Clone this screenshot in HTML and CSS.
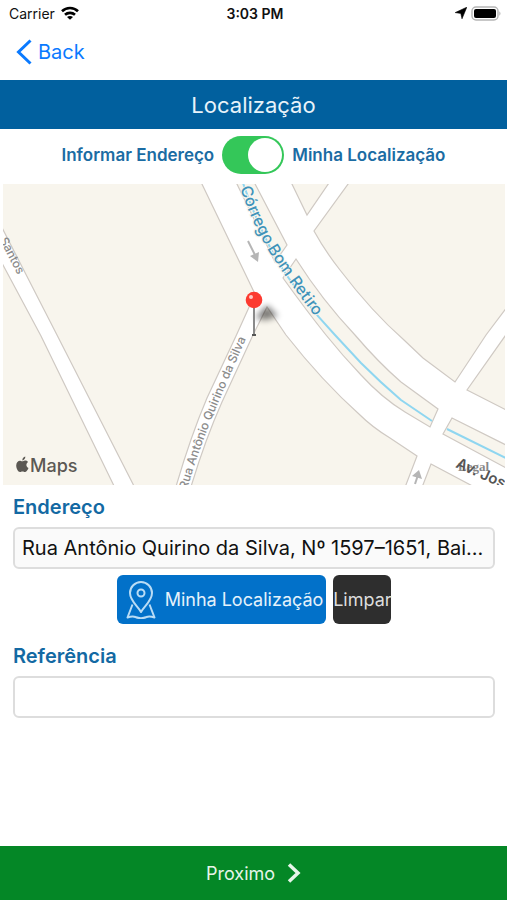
FILE: index.html
```html
<!DOCTYPE html>
<html lang="pt-BR">
<head>
    <meta charset="UTF-8">
    <meta name="viewport" content="width=device-width, initial-scale=1.0">
    <title>Localização</title>
    <link rel="stylesheet" href="styles.css">
</head>
<body>
    <div class="status-bar">
        <div class="carrier">
            <span>Carrier</span>
            <svg width="18" height="14" viewBox="0 0 18 14" fill="none" stroke="#000" stroke-width="2.600">
                <path d="M1 5.2C5.4 .9 12.6 .9 17 5.2"/>
                <path d="M4 8.800c2.800-2.600 7.200-2.600 10 0"/>
                <path d="M9 13.800L6 11c1.700-1.500 4.300-1.500 6 0z" fill="#000" stroke="none"/>
            </svg>
        </div>
        <div class="time">3:03 PM</div>
        <div class="indicators">
            <svg width="12" height="12" viewBox="0 0 12 12">
                <path d="M11.800 .2L7 11.800 5.800 6.400 .2 5.600z" stroke="#000" stroke-width=".6"/>
            </svg>
            <svg width="30" height="15" viewBox="0 0 30 15">
                <rect x="1" y="1" width="26" height="13" rx="4" fill="#fff" stroke="#b5b5b5" stroke-width="1.4"/>
                <rect x="3" y="3" width="22" height="9" rx="2"/>
                <path d="M28.3 5.3c1.6.8 1.6 3.6 0 4.4z" fill="#b5b5b5"/>
            </svg>
        </div>
    </div>

    <nav class="nav">
        <a href="#" class="back">
            <svg width="16" height="26" viewBox="0 0 16 26" fill="none" stroke="#0a7aff" stroke-width="3">
                <path d="M14.5 1.5L2.5 13l12 11.5"/>
            </svg>
            Back
        </a>
    </nav>

    <h1 class="title">Localização</h1>

    <div class="mode">
        <span>Informar Endereço</span>
        <input type="checkbox" id="mode-switch" class="switch" checked>
        <label for="mode-switch">Minha Localização</label>
    </div>

    <div class="map">
        <svg class="map-canvas" viewBox="3 184 502 301" preserveAspectRatio="xMidYMid slice">
            <defs>
                <path id="p-corrego" d="M240 188Q253 225 268 250T326 331"/>
                <path id="p-rua" d="M187 490Q198 452 212 418T249 332"/>
                <path id="p-santos" d="M-5 231L30 299"/>
                <path id="p-jose" d="M455 467L520 496"/>
                <filter id="soft" x="-50%" y="-50%" width="200%" height="200%"><feGaussianBlur stdDeviation="3"/></filter>
            </defs>

            <!-- blocks -->
            <g class="block">
                <path d="M-5 250L3 265 41 336 116 490H-5z"/>
                <path d="M-5 180H200L255 294 236 336 207 398Q190 438 175 490H136L57 335-5 214z"/>
                <path d="M267 307L253 335 222 402Q205 440 190 490H404L417 456 390 438Q372 427 360 415 322 381 286 335z"/>
                <path d="M431 464L480 490H421z"/>
                <path d="M235 180H253L287 245 275 262z"/>
                <path d="M296 259L283 278Q306 310 326 335 342 355 361 375 382 398 405 412L430 427 438 409 401 382Q378 362 355 335 322 300 296 259z"/>
                <path d="M452 418L510 447V470L443 434z"/>
                <path d="M290 180L307 215 331 180z"/>
                <path d="M351 180L314 231Q325 251 340 270 372 312 404 340L423 358 455 382 486 335 510 303V180z"/>
                <path d="M467 390L510 412V329z"/>
            </g>

            <!-- stream -->
            <g class="water">
                <path d="M242 180Q256 222 275 257 300 298 335 335L361 363Q380 382 401 400L432 421"/>
                <path d="M447 429L510 460"/>
            </g>

            <g class="arrow">
                <path d="M248 241L255 255"/>
                <path class="head" d="M250 256L259 252 258 262z"/>
                <path d="M415 484L418 475"/>
                <path class="head" d="M412 476L419 470 422 479z"/>
            </g>

            <text class="stream-name"><textPath href="#p-corrego">Córrego Bom Retiro</textPath></text>
            <text class="street-name"><textPath href="#p-rua">Rua Antônio Quirino da Silva</textPath></text>
            <text class="street-name"><textPath href="#p-santos" startOffset="10">Santos</textPath></text>
            <text class="legal" x="458" y="471">Legal</text>
            <text class="avenue-name"><textPath href="#p-jose">Av. José</textPath></text>

            <!-- pin -->
            <path d="M255 318L267 305 278 316 266 320z" opacity=".5" filter="url(#soft)"/>
            <path d="M254 308V334" stroke="#8a8a8a" stroke-width="2"/>
            <path d="M252 335H256" stroke="#555" stroke-width="2"/>
            <circle cx="254" cy="300" r="8.3" fill="#fc3a30"/>
            <circle cx="251" cy="297" r="2" fill="#ffc9c5"/>

            <!-- apple logo -->
            <g fill="#5b5853">
                <path d="M23 461.2c1.4-.9 3.800-.9 5 .8-2.300 1.500-2 5 .5 6-.8 2.200-2.200 4-3.500 4-1 0-1.400-.5-2.500-.5s-1.600.5-2.500.5c-2 0-3.800-3.700-3.800-6.500 0-3.600 2.800-5.200 4.700-4.500 1 .4 1.500.4 2.100.2z"/>
                <path d="M22.300 460.400c0-2 1.300-3.500 3-3.800.2 2-1.200 3.700-3 3.800z"/>
            </g>
            <text class="maps-name" x="30" y="472">Maps</text>
        </svg>
    </div>

    <form class="form">
        <label for="endereco">Endereço</label>
        <input type="text" id="endereco" class="filled" value="Rua Antônio Quirino da Silva, Nº 1597–1651, Bai..." readonly>
        <div class="actions">
            <button type="button" class="btn-location">
                <svg width="30" height="38" viewBox="0 0 30 38" fill="none" stroke="#b9dcf5" stroke-width="2" stroke-linejoin="round">
                    <path d="M15 31C12 25 4 20 4 12a11 11 0 0 1 22 0c0 8-8 13-11 19z"/>
                    <circle cx="15" cy="12" r="3.500"/>
                    <path d="M6.500 23.500L1.500 36.500c4-1.500 6-1.500 8-.5 3 1.300 8 1.300 11 0 2-1 4-1 8 .5L23.500 23.500"/>
                </svg>
                Minha Localização
            </button>
            <button type="button" class="btn-clear">Limpar</button>
        </div>
        <label for="referencia">Referência</label>
        <input type="text" id="referencia">
    </form>

    <button type="button" class="next">
        Proximo
        <svg width="14" height="20" viewBox="0 0 14 20" fill="none" stroke="#e6f5e9" stroke-width="3.500">
            <path d="M2 1.500L11 10 2 18.500"/>
        </svg>
    </button>
</body>
</html>
```

FILE: styles.css
```css
* {
    box-sizing: border-box;
}
body {
    margin: 0;
    min-height: 100vh;
    display: flex;
    flex-direction: column;
    background-color: #fff;
    font-family: Inter, "Liberation Sans", sans-serif;
}
button, input {
    font-family: inherit;
}
.status-bar {
    display: grid;
    grid-template-columns: 1fr auto 1fr;
    align-items: center;
    height: 26px;
    padding: 0 6px 0 9px;
    font-size: 14px;
    color: #111;
}
.carrier {
    display: flex;
    align-items: center;
    gap: 6px;
}
.time {
    font-weight: 600;
}
.indicators {
    display: flex;
    align-items: center;
    justify-content: flex-end;
    gap: 4px;
}
.nav {
    height: 54px;
    padding: 0 16px;
}
.back {
    display: inline-flex;
    align-items: center;
    gap: 6px;
    height: 52px;
    font-size: 20px;
    color: #0a7aff;
    text-decoration: none;
}
.title {
    margin: 0;
    height: 49px;
    line-height: 50px;
    text-align: center;
    font-size: 22px;
    font-weight: 400;
    color: #e8f3fa;
    background-color: #01609e;
}
.mode {
    display: flex;
    align-items: center;
    justify-content: center;
    gap: 8px;
    height: 55px;
    padding-bottom: 3px;
    font-size: 17px;
    font-weight: 600;
    color: #1b6ca3;
}
.switch {
    appearance: none;
    width: 62px;
    height: 38px;
    margin: 0;
    padding: 2px;
    border-radius: 19px;
    background-color: #ccc;
}
.switch::before {
    content: "";
    display: block;
    width: 34px;
    height: 34px;
    border-radius: 50%;
    background-color: #fff;
}
.switch:checked {
    background-color: #34c759;
}
.switch:checked::before {
    margin-left: auto;
}
.map {
    height: 301px;
    margin: 0 2px 0 3px;
}
.map-canvas {
    display: block;
    width: 100%;
    height: 100%;
}
.block {
    fill: #f8f5ed;
    stroke: #cfc9c3;
    stroke-width: 1.2;
}
.water {
    fill: none;
    stroke: #8fd6f0;
    stroke-width: 2;
}
.arrow {
    stroke: #b5b5b5;
    stroke-width: 2;
}
.arrow .head {
    fill: #b5b5b5;
    stroke: none;
}
.stream-name {
    font-size: 16px;
    font-weight: 500;
    fill: #3f93ba;
    stroke: #f8f5ed;
    stroke-width: 2px;
    paint-order: stroke;
}
.street-name {
    font-size: 12px;
    font-weight: 500;
    fill: #8b8b8b;
}
.avenue-name {
    font-size: 15px;
    font-weight: 600;
    fill: #555;
}
.legal {
    font-family: "Liberation Serif", serif;
    font-size: 13px;
    font-weight: 700;
    fill: #888;
}
.maps-name {
    font-size: 18px;
    font-weight: 500;
    fill: #5b5853;
}
.form {
    flex: 1;
    display: flex;
    flex-direction: column;
    padding: 8px 12px 24px 13px;
}
.form label {
    height: 34px;
    line-height: 28px;
    font-size: 20px;
    font-weight: 600;
    color: #1369a3;
}
.form input {
    width: 100%;
    height: 42px;
    padding: 0 7px;
    border: 2px solid #ddd;
    border-radius: 6px;
    font-size: 20px;
    color: #111;
    background-color: #fff;
    text-overflow: ellipsis;
}
.form .filled {
    background-color: #fafafa;
}
.actions {
    display: flex;
    justify-content: center;
    gap: 7px;
    margin: 6px 0 18px;
}
.actions button {
    display: flex;
    align-items: center;
    justify-content: center;
    height: 49px;
    border: 0;
    border-radius: 6px;
    font-size: 18px;
    white-space: nowrap;
}
.actions .btn-location {
    gap: 9px;
    padding: 0 3px 0 9px;
    color: #e5f2fb;
    background-color: #0271c9;
}
.actions .btn-clear {
    width: 58px;
    padding: 0;
    color: #ddd;
    background-color: #2e2e2e;
}
.next {
    display: flex;
    align-items: center;
    justify-content: center;
    gap: 12px;
    height: 54px;
    border: 0;
    font-size: 18px;
    color: #e6f5e9;
    background-color: #048726;
}
```
